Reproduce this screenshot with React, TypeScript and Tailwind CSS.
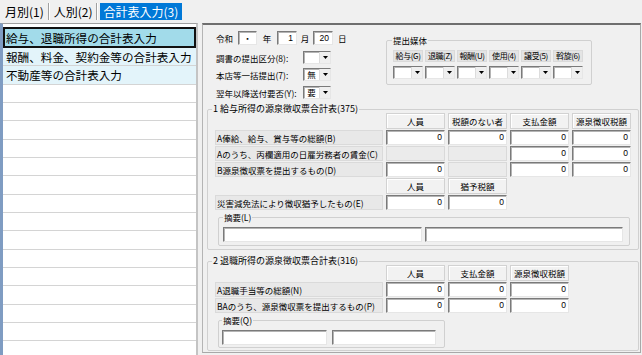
import React from "react";

const F = "font-['Noto_Sans_CJK_JP','Noto_Sans_CJK_SC',sans-serif]";
const SUNK =
  "bg-white border border-t-[#7a7a7a] border-l-[#7a7a7a] border-r-[#e6e6e6] border-b-[#e6e6e6] shadow-[inset_1px_1px_0_#b4b4b4]";

function Tri() {
  return (
    <svg width="5" height="3" viewBox="0 0 5 3">
      <polygon points="0,0 5,0 2.5,3" fill="#000" />
    </svg>
  );
}

function Combo({ v = "", cls }: { v?: string; cls: string }) {
  return (
    <div className={`flex h-[13px] ${SUNK} ${cls}`}>
      <div className="flex-1 text-center text-[8.5px] leading-[11px]">{v}</div>
      <div className="w-[11px] h-full flex items-center justify-center bg-[#efefef] border-l border-[#dcdcdc]">
        <Tri />
      </div>
    </div>
  );
}

function N() {
  return (
    <div className={`h-[15px] ${SUNK} text-right pr-[2px] text-[8.5px] leading-[13px] font-['Liberation_Sans',sans-serif]`}>
      0
    </div>
  );
}

function D() {
  return <div className="h-[15px] bg-[#ebebeb] border border-[#d9d9d9]" />;
}

function H({ children }: { children?: React.ReactNode }) {
  return (
    <div className="h-[16px] bg-[#f2f2f2] border border-[#d2d2d2] shadow-[inset_1px_1px_0_#ffffff] flex items-center justify-center text-[8.5px] leading-[10px]">
      {children}
    </div>
  );
}

function L({ children }: { children?: React.ReactNode }) {
  return (
    <div className="h-[15px] bg-[#e8e8e8] border border-[#dadada] flex items-center pl-[1px] text-[8.5px] leading-[10px] whitespace-nowrap overflow-hidden">
      {children}
    </div>
  );
}

function TBox({ cls }: { cls: string }) {
  return <div className={`h-[15px] ${SUNK} ${cls}`} />;
}

export default function App() {
  return (
    <div className={`w-[642px] h-[355px] overflow-hidden bg-[#f0f0f0] text-black ${F} flex flex-col`}>
      {/* tab bar */}
      <div className="h-[23px] shrink-0 flex items-start pt-[3px] pl-[4px] text-[12px] leading-[17px]">
        <div className="h-[17px] px-[1px]">月別(1)</div>
        <div className="mx-[3px] h-[17px] w-[2px] border-l border-l-[#a0a0a0] border-r border-r-white" />
        <div className="h-[17px] px-[1px]">人別(2)</div>
        <div className="mx-[2px] h-[17px] w-[2px] border-l border-l-[#a0a0a0] border-r border-r-white" />
        <div className="h-[17px] px-[4px] bg-[#0078d7] text-white">合計表入力(3)</div>
      </div>

      <div className="flex flex-1 min-h-0">
        {/* left list */}
        <div className="w-[198px] h-full shrink-0 bg-white border-l-[3px] border-l-[#7f9cc2] border-r-2 border-r-[#c4c4c4] border-t border-t-[#a0a0a0] pt-[3px] flex flex-col overflow-hidden text-[11.6px] leading-[14px]">
          <div className="h-[21px] shrink-0 bg-[#a2dbea] border-2 border-[#111111] flex items-center pl-[1px] whitespace-nowrap">
            給与、退職所得の合計表入力
          </div>
          <div className="h-[18.33px] shrink-0 bg-[#e3f4fa] border-b border-[#d4d4d4] flex items-center pl-[3px] whitespace-nowrap">
            報酬、料金、契約金等の合計表入力
          </div>
          <div className="h-[18.33px] shrink-0 bg-[#e3f4fa] border-b-[1.5px] border-[#d4d4d4] flex items-center pl-[3px] whitespace-nowrap">
            不動産等の合計表入力
          </div>
          {Array.from({ length: 15 }).map((_, i) => (
            <div key={i} className="h-[18.33px] shrink-0 border-b-[1.5px] border-[#d4d4d4]" />
          ))}
        </div>

        <div className="w-[4px] shrink-0" />

        {/* right panel */}
        <div className="w-[439px] h-[330px] shrink-0 border-l border-l-[#b4b4b4] border-r border-r-[#a8a8a8] border-t-2 border-t-[#6e6e6e] border-b border-b-[#a8a8a8] flex flex-col text-[8.5px] leading-[10px]">
          {/* top area */}
          <div className="h-[80px] shrink-0 flex">
            <div className="w-[183px] shrink-0 pl-[13px] pt-[6px] flex flex-col gap-[4px]">
              <div className="h-[14px] flex items-center">
                <span className="w-[22px]">令和</span>
                <div className={`w-[19px] h-[14px] ${SUNK} flex items-center justify-center`}>・</div>
                <span className="w-[20px] text-center">年</span>
                <div className={`w-[20px] h-[14px] ${SUNK} text-right pr-[3px] leading-[12px] font-['Liberation_Sans',sans-serif]`}>1</div>
                <span className="w-[16px] text-center">月</span>
                <div className={`w-[20px] h-[14px] ${SUNK} text-right pr-[3px] leading-[12px] font-['Liberation_Sans',sans-serif]`}>20</div>
                <span className="ml-[5px]">日</span>
              </div>
              <div className="h-[13px] mt-[2px] flex items-center">
                <span className="w-[87px] whitespace-nowrap">調書の提出区分(8):</span>
                <Combo cls="w-[28px]" />
              </div>
              <div className="h-[13px] flex items-center">
                <span className="w-[87px] whitespace-nowrap">本店等一括提出(7):</span>
                <Combo v="無" cls="w-[28px]" />
              </div>
              <div className="h-[13px] mt-[1px] flex items-center">
                <span className="w-[87px] whitespace-nowrap">翌年以降送付要否(Y):</span>
                <Combo v="要" cls="w-[28px]" />
              </div>
            </div>
            <fieldset className="mt-[11px] w-[206px] h-[49px] border border-[#d0d0d0] rounded-[2px] pl-[6px] pt-[6px]">
              <legend className="px-[1px] -ml-[1px] leading-[8px]">提出媒体</legend>
              <div className="flex gap-[2px]">
                {["給与(G)", "退職(Z)", "報酬(U)", "使用(4)", "譲受(5)", "斡旋(6)"].map((t) => (
                  <div key={t} className="w-[30px] h-[12px] bg-[#e4e4e4] border border-[#dadada] flex items-center justify-center whitespace-nowrap text-[8px] tracking-[-0.4px]">
                    {t}
                  </div>
                ))}
              </div>
              <div className="flex gap-[2px] mt-[4px]">
                {[0, 1, 2, 3, 4, 5].map((i) => (
                  <Combo key={i} cls="w-[30px]" />
                ))}
              </div>
            </fieldset>
          </div>

          {/* section 1 */}
          <fieldset className="ml-[4px] w-[432px] border border-[#d0d0d0] rounded-[2px] pl-[7px] pb-[3px]">
            <legend className="px-[1px] -ml-[3px] leading-[8px] text-[9px]">1 給与所得の源泉徴収票合計表(375)</legend>
            <div className="grid grid-cols-[168px_59px_59px_59px_59px] gap-x-[3px] gap-y-[1px]">
              <div />
              <H>人員</H>
              <H>税額のない者</H>
              <H>支払金額</H>
              <H>源泉徴収税額</H>
              <L>A俸給、給与、賞与等の総額(B)</L>
              <N />
              <N />
              <N />
              <N />
              <L>Aのうち、丙欄適用の日雇労務者の賃金(C)</L>
              <D />
              <D />
              <N />
              <N />
              <L>B源泉徴収票を提出するもの(D)</L>
              <N />
              <D />
              <N />
              <N />
              <div />
              <H>人員</H>
              <H>猶予税額</H>
              <div />
              <div />
              <L>災害減免法により徴収猶予したもの(E)</L>
              <N />
              <N />
              <div />
              <div />
            </div>
            <fieldset className="mt-[3px] ml-[3px] w-[412px] border border-[#d0d0d0] rounded-[2px] pl-[4px] pt-[6px] pb-[3px]">
              <legend className="px-[1px] leading-[8px]">摘要(L)</legend>
              <div className="flex gap-[3px]">
                <TBox cls="w-[199px]" />
                <TBox cls="w-[198px]" />
              </div>
            </fieldset>
          </fieldset>

          {/* section 2 */}
          <fieldset className="mt-[7px] ml-[4px] w-[432px] border border-[#d0d0d0] rounded-[2px] pl-[7px] pb-[2px]">
            <legend className="px-[1px] -ml-[3px] leading-[8px] text-[9px]">2 退職所得の源泉徴収票合計表(316)</legend>
            <div className="grid grid-cols-[168px_59px_59px_59px] gap-x-[3px] gap-y-[1px]">
              <div />
              <H>人員</H>
              <H>支払金額</H>
              <H>源泉徴収税額</H>
              <L>A退職手当等の総額(N)</L>
              <N />
              <N />
              <N />
              <L>BAのうち、源泉徴収票を提出するもの(P)</L>
              <N />
              <N />
              <N />
            </div>
            <fieldset className="mt-[3px] ml-[3px] w-[227px] border border-[#d0d0d0] rounded-[2px] pl-[3px] pt-[6px] pb-[2px]">
              <legend className="px-[1px] leading-[8px]">摘要(Q)</legend>
              <div className="flex gap-[5px]">
                <TBox cls="w-[105px] h-[14px]" />
                <TBox cls="w-[104px] h-[14px]" />
              </div>
            </fieldset>
          </fieldset>
        </div>
      </div>
    </div>
  );
}
